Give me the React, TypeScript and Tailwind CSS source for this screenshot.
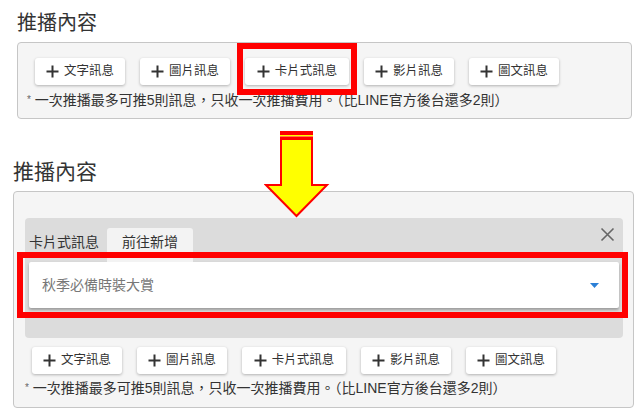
import React from 'react';

const FONT = { fontFamily: '"Liberation Sans", "Noto Sans CJK TC", sans-serif' };

const BUTTONS = [
  { label: '文字訊息', w: 'w-[90px]' },
  { label: '圖片訊息', w: 'w-[90px]' },
  { label: '卡片式訊息', w: 'w-[104px]' },
  { label: '影片訊息', w: 'w-[90px]' },
  { label: '圖文訊息', w: 'w-[90px]' },
];

function Plus() {
  return (
    <svg width="13" height="13" viewBox="0 0 13 13" className="shrink-0">
      <path d="M6.5 0.5V12.5M0.5 6.5H12.5" stroke="#333" strokeWidth="2" />
    </svg>
  );
}

function AddButtons() {
  return (
    <div className="flex gap-[15px]">
      {BUTTONS.map((b) => (
        <div
          key={b.label}
          className={`${b.w} h-[27px] flex items-center justify-center gap-[5px] bg-white rounded-[3px] shadow-[0_1px_3px_rgba(0,0,0,0.28)] text-[12.5px] text-[#333]`}
        >
          <Plus />
          <span>{b.label}</span>
        </div>
      ))}
    </div>
  );
}

function Note({ className }: { className: string }) {
  return (
    <p className={`text-[14px] leading-[16px] text-[#333] whitespace-nowrap ${className}`}>
      <span className="text-[10px] align-top text-[#666]">*</span> 一次推播最多可推5則訊息，只收一次推播費用。（比LINE官方後台還多2則）
    </p>
  );
}

function Arrow() {
  return (
    <svg width="66" height="90" viewBox="264 130 66 90" className="absolute left-[264px] top-[130px]">
      <rect x="280" y="131" width="33" height="4" fill="#ff0000" />
      <rect x="280" y="135" width="33" height="1.5" fill="#ffff00" />
      <rect x="280" y="136.5" width="33" height="2" fill="#ff0000" />
      <polygon
        points="281,139 312,139 312,185 327,185 296.5,216 266,185 281,185"
        fill="#ffff00"
        stroke="#ff0000"
        strokeWidth="2"
        strokeLinejoin="miter"
      />
    </svg>
  );
}

export default function App() {
  return (
    <div className="relative w-[643px] h-[415px] bg-white overflow-hidden" style={FONT}>
      {/* Before */}
      <div className="pt-[10px]">
        <h2 className="ml-[17px] text-[20px] leading-[26px] text-[#333]">推播內容</h2>
        <div className="mt-[6px] ml-[17px] w-[615px] h-[77px] border border-[#c6c6c6] rounded-[4px] bg-[#f5f5f5] pt-[15px]">
          <div className="pl-[17px]">
            <AddButtons />
          </div>
          <Note className="mt-[7px] pl-[9px]" />
        </div>
      </div>

      {/* After */}
      <div className="mt-[39px]">
        <h2 className="ml-[13px] text-[21px] leading-[28px] text-[#333]">推播內容</h2>
        <div className="mt-[5px] ml-[13px] w-[621px] h-[217px] border border-[#c6c6c6] rounded-[4px] bg-[#f5f5f5] pt-[26px]">
          <div className="ml-[11px] w-[598px] h-[120px] bg-[#dcdcdc] rounded-[4px] px-[4px] pt-[10px]">
            <div className="flex items-start h-[34px]">
              <span className="mt-[4px] text-[14px] leading-[20px] text-[#333] w-[78px]">卡片式訊息</span>
              <div className="w-[86px] h-[34px] bg-[#f3f3f3] rounded-t-[3px] pt-[4px] text-center text-[14px] leading-[20px] text-[#333]">
                前往新增
              </div>
              <div className="ml-auto mr-[4px] -mt-[1px]">
                <svg width="15" height="15" viewBox="0 0 15 15">
                  <path d="M1.5 1.5L13.5 13.5M13.5 1.5L1.5 13.5" stroke="#666" strokeWidth="1.6" />
                </svg>
              </div>
            </div>
            <div className="h-[46px] bg-white rounded-[2px] shadow-[0_2px_3px_rgba(0,0,0,0.3)] flex items-center pl-[13px] pr-[20px]">
              <span className="text-[14px] text-[#777]">秋季必備時裝大賞</span>
              <svg width="9" height="5" viewBox="0 0 9 5" className="ml-auto">
                <polygon points="0,0 9,0 4.5,5" fill="#2b7fd6" />
              </svg>
            </div>
          </div>
          <div className="mt-[9px] pl-[18px]">
            <AddButtons />
          </div>
          <Note className="mt-[6px] pl-[11px]" />
        </div>
      </div>

      {/* Annotations */}
      <div className="absolute left-[237px] top-[43px] w-[120px] h-[52px] border-[6px] border-[#ff0000]" />
      <Arrow />
      <div className="absolute left-[17px] top-[252px] w-[611px] h-[66px] border-[6px] border-[#ff0000]" />
    </div>
  );
}
